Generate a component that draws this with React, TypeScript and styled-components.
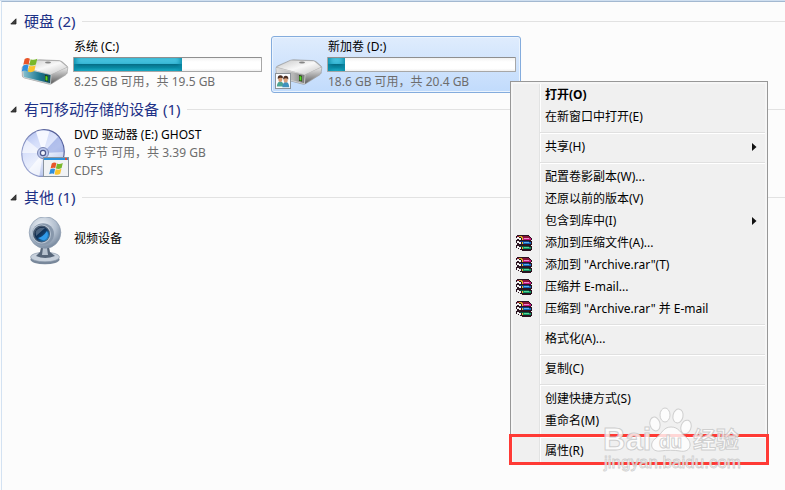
import React from "react";
import styled, { createGlobalStyle, css } from "styled-components";

const GlobalStyle = createGlobalStyle`
  * { box-sizing: border-box; }
  body {
    margin: 0;
    background: #fcfcfc;
    font: 12px/18px "Noto Sans", "Noto Sans CJK SC", sans-serif;
    color: #000;
  }
  h2, p, ul { margin: 0; padding: 0; }
  ul { list-style: none; }
  button { font: inherit; color: inherit; border: 0; padding: 0; background: none; }
`;

const Page = styled.main`
  position: relative;
  min-height: 100vh;
  overflow: hidden;
  background: #fcfcfc;
  border-top: 1px solid #cfdff0;
  display: flex;
`;

const Pane = styled.div`
  flex: 1;
  min-width: 0;
  margin-left: 1px;
  border-top: 1px solid #a3b8d0;
  border-left: 1px solid #d3e2f2;
  padding-top: 9px;
  display: flex;
  flex-direction: column;
  gap: 6px;
`;

const Group = styled.section`
  display: flex;
  flex-direction: column;
  gap: 5px;
`;

const GroupHeader = styled.h2`
  display: flex;
  align-items: center;
  gap: 7px;
  padding-left: 8px;
  font-size: 15px;
  line-height: 20px;
  font-weight: 400;
  color: #1e3287;

  &::after {
    content: "";
    flex: 1;
    height: 1px;
    background: #e2e2e2;
  }
`;

const GroupToggle = styled.button`
  display: flex;
  align-items: center;
  gap: 7px;
  white-space: nowrap;
`;

const Tiles = styled.ul`
  display: flex;
  gap: 4px;
  padding-left: 15px;
`;

const Tile = styled.li<{ $selected?: boolean }>`
  position: relative;
  display: flex;
  align-items: center;
  gap: 4px;
  width: 250px;
  min-height: 57px;
  padding: 0 4px 0 3px;
  border: 1px solid transparent;
  border-radius: 3px;
  ${(p) =>
    p.$selected &&
    css`
      border-color: #84acdd;
      background: linear-gradient(#dfecfd, #c1dbfc);
      box-shadow: inset 0 0 0 1px #ebf4fe;
    `}
`;

const TileIcon = styled.svg`
  width: 48px;
  height: 48px;
  flex: none;
`;

const TileText = styled.div`
  flex: 1;
  min-width: 0;
  display: flex;
  flex-direction: column;
  gap: 1px;
`;

const Lines = styled.div`
  flex: 1;
`;

const SingleLine = styled(Lines)`
  padding-bottom: 4px;
`;

const Name = styled.p`
  padding-left: 1px;
  white-space: nowrap;
`;

const Detail = styled.p`
  padding-left: 1px;
  color: #6d6d6d;
  white-space: nowrap;
`;

const Track = styled.div`
  height: 15px;
  border: 1px solid #a7a7a7;
  border-top-color: #8f8f8f;
  border-radius: 1px;
  background: linear-gradient(#f2f2f2, #fff 30%, #fff 80%, #f0f0f0);
`;

const Fill = styled.div`
  height: 100%;
  background: linear-gradient(#58d0ea, #34b4d2 46%, #056f88 50%, #0a8aa4 75%, #1fb4cd);
  box-shadow: inset 4px 0 5px -2px #0c8ca8, inset -4px 0 5px -2px #0c8ca8;
`;

const Menu = styled.div`
  position: absolute;
  z-index: 2;
  left: 238px;
  top: 44px;
  width: 258px;
  padding: 2px;
  border: 1px solid #979797;
  background: #f0f0f0;
  box-shadow: inset 0 0 0 2px #f6f6f6;
`;

const MenuList = styled.div`
  background: linear-gradient(to right, transparent 26px, #e2e3e3 26px, #e2e3e3 27px, #fff 27px, #fff 28px, transparent 28px);
`;

const MenuItem = styled.button<{ $bold?: boolean; $marked?: boolean }>`
  position: relative;
  display: grid;
  grid-template-columns: 32px 1fr 13px;
  align-items: center;
  width: 100%;
  height: 22px;
  text-align: left;
  white-space: nowrap;
  font-weight: ${(p) => (p.$bold ? 700 : 400)};
  ${(p) =>
    p.$marked &&
    css`
      &::after {
        content: "";
        position: absolute;
        inset: -6px -4px -3px;
        border: 3px solid #ff3a35;
      }
    `}
`;

const IconCell = styled.span`
  display: flex;
  padding-left: 3px;
`;

const Separator = styled.hr`
  height: 2px;
  margin: 4px 0 2px 27px;
  border: 0;
  border-top: 1px solid #e0e0e0;
  border-bottom: 1px solid #fff;
`;

const Watermark = styled.div`
  position: absolute;
  z-index: 3;
  left: 602px;
  top: 402px;
  width: 142px;
  pointer-events: none;
`;

const WatermarkArt = styled.svg`
  display: block;
  width: 142px;
  height: 72px;
  overflow: visible;
`;

const WindowsFlag = ({ x, y, s }: { x: number; y: number; s: number }) => (
  <g transform={`translate(${x} ${y}) scale(${s})`}>
    <path d="M3 1.5C5 .2 6.5.4 8 1.2L6.8 6.7C5 5.900 3.600 6 1.700 7z" fill="#e8562a" />
    <path d="M8.700 1.600C10.500 2.500 12.500 2.500 15 1.200L13.700 6.600C11.500 7.800 9.500 7.900 7.500 7.100z" fill="#79b82b" />
    <path d="M1.500 7.800C3.500 6.700 5 6.800 6.600 7.500L5.400 13C3.700 12.200 2.200 12.300.2 13.400z" fill="#2f8ede" />
    <path d="M7.300 7.900C9.300 8.700 11.300 8.700 13.500 7.400L12.200 12.900C10.200 14.200 8 14.200 6.100 13.400z" fill="#fbc42d" />
  </g>
);

const DriveIcon = ({ system }: { system?: boolean }) => {
  const id = system ? "sys" : "vol";
  return (
    <TileIcon viewBox="0 0 48 48" aria-hidden="true">
      <defs>
        <linearGradient id={`${id}-top`} x1="0" y1="0" x2="1" y2="1">
          <stop offset="0" stopColor="#c8c8c8" />
          <stop offset=".5" stopColor="#f8f8f8" />
          <stop offset="1" stopColor="#c4c4c4" />
        </linearGradient>
        <linearGradient id={`${id}-side`} x1="0" y1="0" x2="0" y2="1">
          <stop offset="0" stopColor="#eaeaea" />
          <stop offset=".5" stopColor="#a4a4a4" />
          <stop offset="1" stopColor="#5c5c5c" />
        </linearGradient>
        <linearGradient id={`${id}-front`} x1="0" y1="0" x2="1" y2="0">
          <stop offset="0" stopColor={system ? "#8dc4d2" : "#dedede"} />
          <stop offset=".6" stopColor={system ? "#1c7891" : "#b4b4b4"} />
          <stop offset="1" stopColor={system ? "#144c5a" : "#757575"} />
        </linearGradient>
      </defs>
      <path d="M3 37L29 44L47 32L45 29L20 33z" fill="#777" opacity=".25" />
      <path d="M1 27Q1 25.500 3 24.700L15 19.400Q17 18.600 19 18.700L38 19.600Q40 19.700 41.500 21L46 25Q47 26 46.800 27L46 32Q45.800 33 44.500 34L31 42.500Q29.500 43.400 28 43L3.500 37Q1.500 36.500 1.300 35z" fill="#b0b0b0" stroke="#909090" strokeWidth=".5" />
      <path d="M2 26L16 19.500L39 20.300L46 26L30 33.500z" fill={`url(#${id}-top)`} />
      <path d="M30 33.500L46.500 26.500L45.500 32.800L30 42.800z" fill={`url(#${id}-side)`} />
      <path d="M1.500 27L30 33.700L29.500 42.700L2.500 36.300z" fill={`url(#${id}-front)`} stroke="#ddd" strokeWidth=".7" />
      <ellipse cx="27" cy="21.500" rx="3" ry="1.100" fill="#858585" />
      <path d="M24 34L27 34.800V40.500L24 39.800z" fill="#20360f" />
      <path d="M24.500 35L26.500 35.400V39.700L24.500 39.200z" fill="#55dc28" />
      {system ? (
        <WindowsFlag x={0.5} y={16.5} s={1.05} />
      ) : (
        <g>
          <rect x=".5" y="32.500" width="15" height="15" fill="#fafcff" stroke="#8c9298" />
          <path d="M1.800 45.500Q2.300 40.500 5.300 40.500T8.800 45.500z" fill="#4ca595" />
          <path d="M7.300 46.300Q7.800 41 10.800 41T14.300 46.300z" fill="#3f91bd" />
          <ellipse cx="5.300" cy="38" rx="2" ry="2.900" fill="#d69b72" />
          <ellipse cx="10.700" cy="38.700" rx="2.100" ry="2.900" fill="#d8a17c" />
          <path d="M2.800 38Q2.300 34.300 5.300 34.300T7.800 37.200Q5 35.800 2.800 38M8.200 38.500Q8 34.800 10.800 34.800T13.300 38.500Q11 36.200 8.200 38.500" fill="#4c2f22" />
        </g>
      )}
    </TileIcon>
  );
};

const DiscIcon = () => (
  <TileIcon viewBox="0 0 48 48" aria-hidden="true">
    <defs>
      <linearGradient id="disc" x1="0" y1="0" x2="1" y2="1">
        <stop offset="0" stopColor="#a8b9ec" />
        <stop offset=".3" stopColor="#d4ddfa" />
        <stop offset=".55" stopColor="#e9eefc" />
        <stop offset="1" stopColor="#96a9e2" />
      </linearGradient>
      <linearGradient id="disc-rim" x1="0" y1="1" x2="1" y2="0">
        <stop offset="0" stopColor="#a8b3dd" />
        <stop offset="1" stopColor="#424c88" />
      </linearGradient>
    </defs>
    <g transform="rotate(14 22 24)">
      <ellipse cx="22" cy="24" rx="21" ry="23.500" fill="url(#disc)" stroke="url(#disc-rim)" strokeWidth="1.200" />
      <path d="M22 24L10 5Q16 1 23 1.500z" fill="#f9fbff" opacity=".9" />
      <path d="M22 24L1.500 29Q1 21 3 15z" fill="#fff" opacity=".6" />
      <path d="M22 24L33 4Q40 9 42 18z" fill="#7d93dc" opacity=".5" />
      <path d="M22 24L12 44Q17 47 24 47z" fill="#fff" opacity=".7" />
    </g>
    <circle cx="22" cy="24" r="5.500" fill="#bcc8ec" stroke="#7a86b5" strokeWidth="1" />
    <circle cx="22" cy="24" r="2.600" fill="#f4f6fd" stroke="#4c578b" strokeWidth="1.200" />
    <rect x="22.500" y="28.500" width="25" height="19" fill="#f1f3f5" stroke="#8b959f" />
    <path d="M23 29H47V31H23z" fill="#2d91dc" />
    <path d="M44 29H46V31H44z" fill="#e04b34" />
    <WindowsFlag x={28} y={33} s={0.92} />
  </TileIcon>
);

const WebcamIcon = () => (
  <TileIcon viewBox="0 1 48 48" aria-hidden="true">
    <defs>
      <radialGradient id="cam-body" cx=".4" cy=".3" r=".75">
        <stop offset="0" stopColor="#eef2f7" />
        <stop offset=".6" stopColor="#b2bfcf" />
        <stop offset="1" stopColor="#708298" />
      </radialGradient>
      <linearGradient id="cam-lens" x1="0" y1="0" x2="1" y2="1">
        <stop offset="0" stopColor="#07152b" />
        <stop offset=".5" stopColor="#123963" />
        <stop offset="1" stopColor="#2fa9f5" />
      </linearGradient>
    </defs>
    <ellipse cx="24" cy="43.500" rx="14.500" ry="4.800" fill="#78879a" />
    <ellipse cx="24" cy="41" rx="14.500" ry="4.800" fill="#c8d1dc" stroke="#8392a5" strokeWidth=".6" />
    <path d="M20 31H28L29 36L34 40Q24 44 15 40L19 36z" fill="#566578" />
    <path d="M22 32H26L27 39H21z" fill="#b6c1ce" />
    <circle cx="24" cy="16.500" r="15.800" fill="url(#cam-body)" stroke="#8a9aae" strokeWidth=".7" />
    <ellipse cx="22" cy="18" rx="11" ry="10.800" fill="#8797ab" />
    <circle cx="20.500" cy="18" r="9.500" fill="#b9c6d4" />
    <circle cx="20.500" cy="18" r="8.500" fill="#46586f" />
    <circle cx="21" cy="18.300" r="7.300" fill="url(#cam-lens)" />
    <path d="M14.500 16Q17 10.500 24 12L15 20z" fill="#8296ad" opacity=".55" />
    <path d="M17 22Q22 21 26 15Q28 19 25.500 22.500T17 22" fill="#319bea" />
  </TileIcon>
);

const BooksIcon = () => (
  <svg width="16" height="16" viewBox="0 0 16 16" shapeRendering="crispEdges" aria-hidden="true">
    <path d="M1 0H13V1H14V2H15V3H16V5H15V6H16V10H15V11H16V15H15V16H6V15H4V14H2V13H0V10H1V8H0V5H1V3H0V1H1z" fill="#2a1420" />
    <path d="M1 1H13V2H14V3H5V2H1z" fill="#8a1238" />
    <path d="M3 1H6V2H7V3H5V2H3z" fill="#d8a820" />
    <path d="M6 3H15V5H6z" fill="#c4187c" />
    <path d="M8 3H13V4H8z" fill="#f08cc8" />
    <path d="M1 2H3V3H5V5H3V4H1z M1 6H3V7H5V9H3V8H1z M1 11H3V12H5V14H3V13H1z" fill="#f4f4f4" />
    <path d="M3 6H13V7H5z" fill="#123a80" />
    <path d="M6 7H15V9H6z" fill="#1266ba" />
    <path d="M8 7H13V8H8z" fill="#5cb4ee" />
    <path d="M3 11H13V12H5z" fill="#0c5840" />
    <path d="M6 12H15V14H6z" fill="#0f9460" />
    <path d="M8 12H13V13H8z" fill="#58d49a" />
    <path d="M6 3H7V5H6z M6 7H7V9H6z M6 12H7V14H6z" fill="#e8c030" />
  </svg>
);

const Submenu = () => (
  <svg width="5" height="8" viewBox="0 0 5 8" aria-hidden="true">
    <path d="M0 0L4.500 4L0 8z" fill="#111" />
  </svg>
);

type Entry = { label: string; books?: boolean; sub?: boolean; bold?: boolean; marked?: boolean };

const menuGroups: Entry[][] = [
  [{ label: "打开(O)", bold: true }, { label: "在新窗口中打开(E)" }],
  [{ label: "共享(H)", sub: true }],
  [
    { label: "配置卷影副本(W)..." },
    { label: "还原以前的版本(V)" },
    { label: "包含到库中(I)", sub: true },
    { label: "添加到压缩文件(A)...", books: true },
    { label: '添加到 "Archive.rar"(T)', books: true },
    { label: "压缩并 E-mail...", books: true },
    { label: '压缩到 "Archive.rar" 并 E-mail', books: true },
  ],
  [{ label: "格式化(A)..." }],
  [{ label: "复制(C)" }],
  [{ label: "创建快捷方式(S)" }, { label: "重命名(M)" }],
  [{ label: "属性(R)", marked: true }],
];

const ContextMenu = () => (
  <Menu role="menu">
    <MenuList>
      {menuGroups.map((group, i) => (
        <React.Fragment key={i}>
          {i > 0 && <Separator />}
          {group.map((e) => (
            <MenuItem key={e.label} type="button" role="menuitem" $bold={e.bold} $marked={e.marked}>
              <IconCell>{e.books && <BooksIcon />}</IconCell>
              <span>{e.label}</span>
              {e.sub && <Submenu />}
            </MenuItem>
          ))}
        </React.Fragment>
      ))}
    </MenuList>
  </Menu>
);

const Header = ({ children }: { children: React.ReactNode }) => (
  <GroupHeader>
    <GroupToggle type="button" aria-expanded="true">
      <svg width="7" height="7" viewBox="0 0 7 7" aria-hidden="true">
        <path d="M6 .8V6H.8z" fill="#404040" stroke="#222" strokeWidth=".8" />
      </svg>
      <span>{children}</span>
    </GroupToggle>
  </GroupHeader>
);

const Volume = ({ name, detail, used }: { name: string; detail: string; used: number }) => (
  <TileText>
    <Name>{name}</Name>
    <Track role="progressbar" aria-label={name} aria-valuenow={used}>
      <Fill style={{ width: `${used}%` }} />
    </Track>
    <Detail>{detail}</Detail>
  </TileText>
);

export default function App() {
  return (
    <Page>
      <GlobalStyle />
      <Pane>
        <Group>
          <Header>硬盘 (2)</Header>
          <Tiles>
            <Tile>
              <DriveIcon system />
              <Volume name="系统 (C:)" detail="8.25 GB 可用，共 19.5 GB" used={58} />
            </Tile>
            <Tile $selected>
              <DriveIcon />
              <Volume name="新加卷 (D:)" detail="18.6 GB 可用，共 20.4 GB" used={9} />
              <ContextMenu />
            </Tile>
          </Tiles>
        </Group>
        <Group>
          <Header>有可移动存储的设备 (1)</Header>
          <Tiles>
            <Tile>
              <DiscIcon />
              <Lines>
                <Name>DVD 驱动器 (E:) GHOST</Name>
                <Detail>0 字节 可用，共 3.39 GB</Detail>
                <Detail>CDFS</Detail>
              </Lines>
            </Tile>
          </Tiles>
        </Group>
        <Group>
          <Header>其他 (1)</Header>
          <Tiles>
            <Tile>
              <WebcamIcon />
              <SingleLine>
                <Name>视频设备</Name>
              </SingleLine>
            </Tile>
          </Tiles>
        </Group>
      </Pane>
      <Watermark>
        <WatermarkArt viewBox="0 0 142 72">
          <g fill="#fff" fillOpacity=".8" stroke="#c4c4c4" strokeOpacity=".8" strokeWidth="1">
            <ellipse cx="53" cy="21" rx="5" ry="7" transform="rotate(-15 53 21)" />
            <ellipse cx="63" cy="12" rx="5" ry="7" />
            <ellipse cx="76" cy="13" rx="5" ry="7" transform="rotate(12 76 13)" />
            <ellipse cx="84" cy="24" rx="5" ry="7" transform="rotate(18 84 24)" />
            <path d="M69 24C61 24 60 31 54 35C46 41 50 49 58 48C65 47 72 47 78 48C88 50 91 41 85 35C78 30 77 24 69 24z" />
            <text x="1" y="47" fontFamily="Liberation Sans, sans-serif" fontWeight="700" fontSize="31">Bai</text>
            <text x="57" y="45" fontFamily="Liberation Sans, sans-serif" fontWeight="700" fontSize="19">du</text>
            <text x="91" y="45" fontFamily="Noto Sans CJK SC, sans-serif" fontWeight="700" fontSize="23">经验</text>
            <text x="2" y="65" fontFamily="Liberation Sans, sans-serif" fontSize="17" strokeWidth=".8">jingyan.baidu.com</text>
          </g>
        </WatermarkArt>
      </Watermark>
    </Page>
  );
}
